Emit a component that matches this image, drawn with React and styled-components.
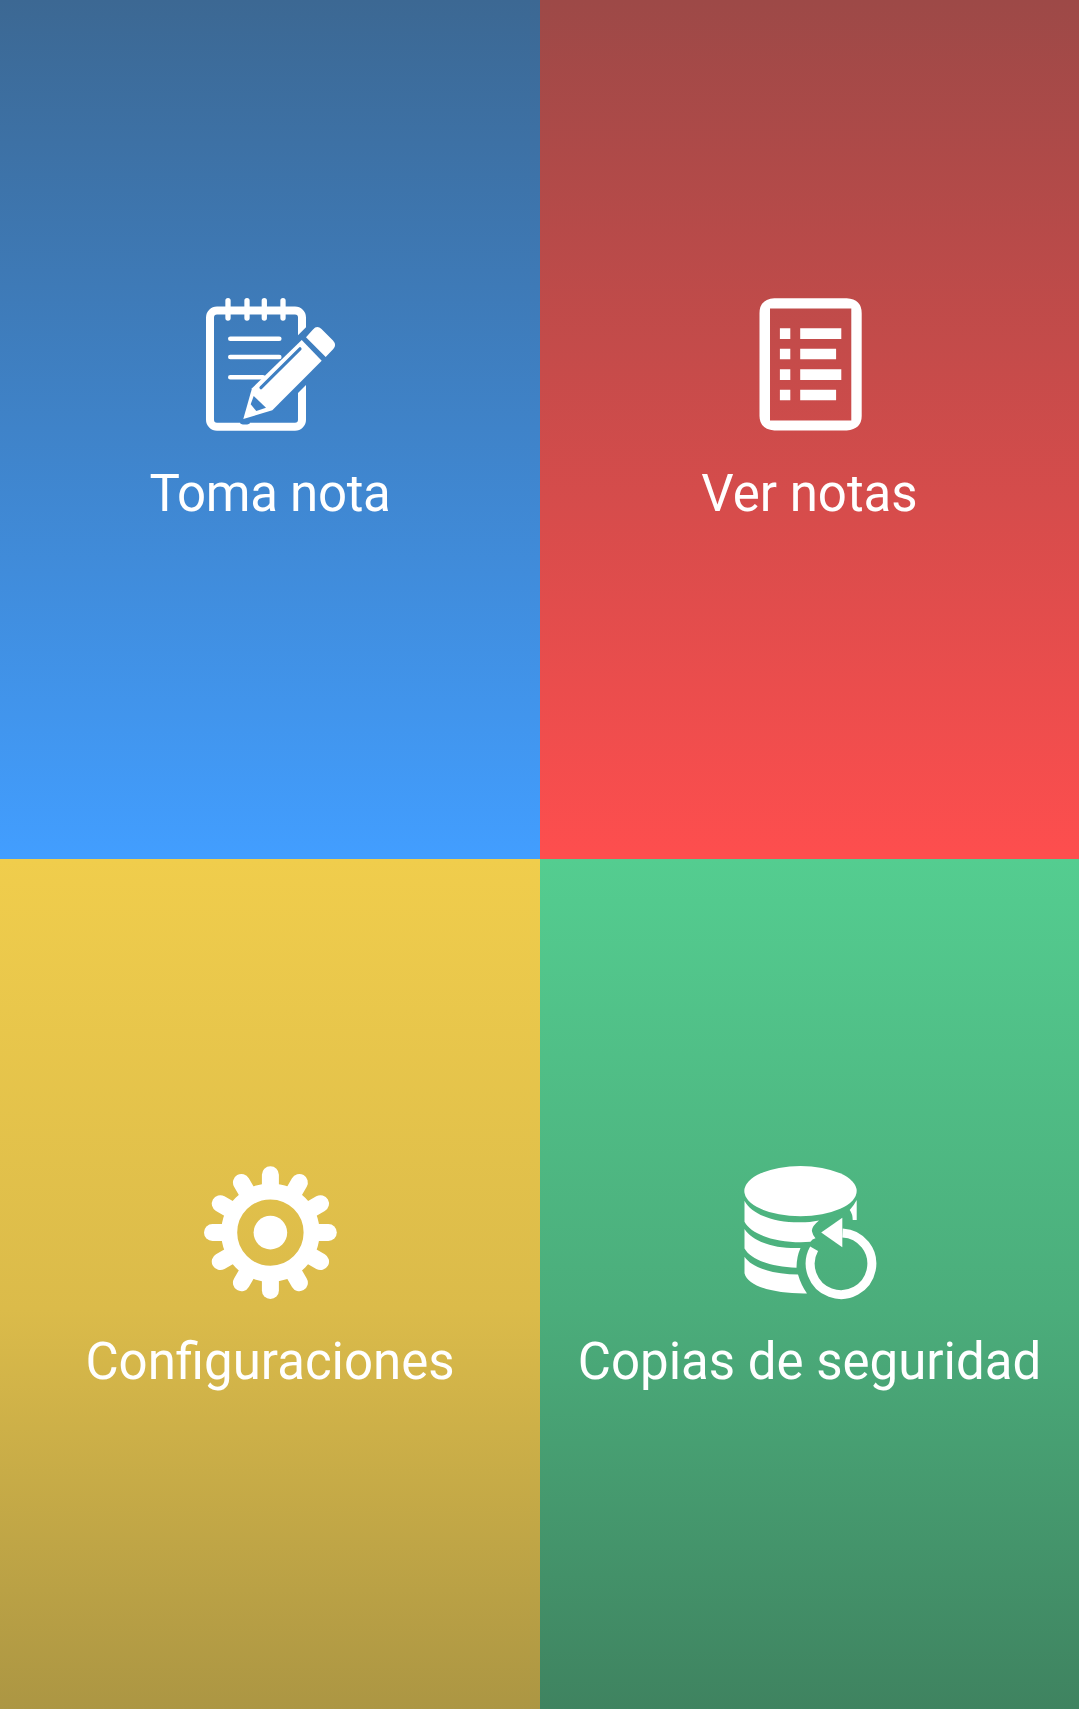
import React from 'react'
import styled, {createGlobalStyle} from 'styled-components'

const GlobalStyle = createGlobalStyle`
  body {
    margin: 0;
    overflow: hidden;
  }
`

const MenuGrid = styled.div`
  display: grid;
  grid-template-columns: 540px 539px;
  grid-template-rows: 859px 850px;
  height: 1709px;
`

const Tile = styled.button`
  display: flex;
  flex-direction: column;
  align-items: center;
  justify-content: flex-start;
  min-width: 0;
  border: none;
  margin: 0;
  padding: ${props => (props.$lower ? '307px' : '298px')} 0 0;
  background: linear-gradient(to bottom, ${props => props.$colors});
  cursor: pointer;
`

const IconBox = styled.svg`
  display: block;
  width: 134px;
  height: 134px;
  overflow: visible;
  fill: #ffffff;
`

const Outline = styled.g`
  fill: none;
  stroke: #ffffff;
  stroke-linecap: round;
`

const TileLabel = styled.span`
  margin-top: 32px;
  font-family: Roboto, 'Liberation Sans', sans-serif;
  font-size: 51px;
  line-height: 60px;
  letter-spacing: ${props => props.$spacing || 'normal'};
  white-space: nowrap;
  color: #ffffff;
`

const NoteIcon = () => (
  <IconBox viewBox="0 0 134 134">
    <defs>
      {/* gap that the pencil leaves in the right border of the sheet */}
      <mask
        id="sheet-mask"
        maskUnits="userSpaceOnUse"
        x="-2"
        y="-2"
        width="138"
        height="138"
      >
        <rect x="-2" y="-2" width="138" height="138" fill="#ffffff" />
        <path d="M90 42.3L110 22.3V80L90 100Z" fill="#000000" />
        <ellipse cx="42" cy="124.600" rx="5" ry="2" fill="#000000" />
      </mask>
      <mask
        id="pencil-mask"
        maskUnits="userSpaceOnUse"
        x="30"
        y="30"
        width="104"
        height="104"
      >
        <rect x="30" y="30" width="104" height="104" fill="#ffffff" />
        <path
          d="M58 89.700L97 50.800"
          stroke="#000000"
          strokeWidth="3.200"
          strokeLinecap="round"
        />
        <path d="M50.700 98L63 109.700L53.300 113L47.700 106.300Z" fill="#000000" />
      </mask>
    </defs>
    <Outline>
      <rect
        x="7"
        y="12.600"
        width="92"
        height="116.200"
        rx="7"
        strokeWidth="8"
        mask="url(#sheet-mask)"
      />
      <path
        d="M25 2.600V20M44 2.600V20M61.300 2.600V20M80 2.600V20"
        strokeWidth="5.300"
      />
      <path
        d="M27.300 40.700H76.300M27.300 59H76.300M27.300 79.300H60"
        strokeWidth="4.600"
      />
    </Outline>
    <path
      d="M98.700 42L118.700 62.700L69.300 112.300L40.300 121L49 90.300Z"
      mask="url(#pencil-mask)"
    />
    <path d="M103 39.300L110 31.500Q114 27 118.500 31L130 42.500Q134 47 130.300 51L122.700 59Z" />
  </IconBox>
)

const ListIcon = () => (
  <IconBox viewBox="0 0 134 134">
    <path
      fillRule="evenodd"
      d="M31.300 0.200H103.700Q118.700 1.200 118.700 15.200V118Q118.700 131 103.700 132.500H31.300Q16.500 131 16.500 118V15.200Q16.500 1.200 31.300 0.200ZM27 10.500V122.500H108.300V10.500Z"
    />
    <path d="M36.900 30.300H47.300V41H36.900ZM36.900 50.700H47.300V61.300H36.900ZM36.900 71.300H47.300V82H36.900ZM36.900 91.700H47.300V102.300H36.900Z" />
    <path d="M57.200 30.300H98.300V41H57.200ZM57.200 50.700H93.100V61.300H57.200ZM57.200 71.300H98.300V82H57.200ZM57.200 91.700H93.100V102.300H57.200Z" />
  </IconBox>
)

const teeth = [0, 30, 60, 90, 120, 150, 180, 210, 240, 270, 300, 330]

const GearIcon = () => (
  <IconBox viewBox="0 0 134 134">
    {teeth.map(angle => (
      <rect
        key={angle}
        x="58.900"
        y="0.200"
        width="17"
        height="28"
        rx="8.500"
        transform={`rotate(${angle} 67.400 66.600)`}
      />
    ))}
    <Outline>
      <circle cx="67.400" cy="66.600" r="41.200" strokeWidth="16" />
    </Outline>
    <circle cx="67.400" cy="66.600" r="16.800" />
  </IconBox>
)

const BackupIcon = () => (
  <IconBox viewBox="0 0 134 134">
    <ellipse cx="57.500" cy="25.100" rx="56.200" ry="25.100" />
    <path d="M1.500 34.700C9 49 32 56.500 57 56.300C64 56.300 70 55.800 76 54.500Q68 61 69 65.500Q70 70 72.500 72.300Q69 73 67.500 75.800C38 78 9 70 1.500 55.700Z" />
    <path d="M1.500 63C10 76 32 83 57.500 82Q53.500 91 53.500 101.700C29 101 8 94 1.500 82.500Z" />
    <path d="M1.500 90.700C9 102 31 108.500 55 108.500Q58 119 64 127.500C33 128 5 121 1.500 107.300Z" />
    <path d="M106.700 44Q111.200 39 113.700 34V54H109.700Q109.700 48 106.700 44Z" />
    <Outline>
      <path
        d="M71.100 82.800A30.800 30.800 0 1 0 99.500 67"
        strokeWidth="9"
        strokeLinecap="butt"
      />
    </Outline>
    <path d="M78.200 66.500L99.300 51.800V81.300Z" />
  </IconBox>
)

const menuItems = [
  {
    id: 'new',
    label: 'Toma nota',
    icon: NoteIcon,
    colors: '#3c6893, #429eff',
    spacing: '-0.3px',
  },
  {id: 'list', label: 'Ver notas', icon: ListIcon, colors: '#9d4947, #fe4e4e'},
  {
    id: 'settings',
    label: 'Configuraciones',
    icon: GearIcon,
    colors: '#f0cd4c, #dbbb4a 53%, #ac9643',
    lower: true,
  },
  {
    id: 'backup',
    label: 'Copias de seguridad',
    icon: BackupIcon,
    colors: '#54cd90, #4bad7b 53%, #3f8360',
    lower: true,
  },
]

const App = () => (
  <>
    <GlobalStyle />
    <MenuGrid>
      {menuItems.map(({id, label, icon: Icon, colors, lower, spacing}) => (
        <Tile key={id} type="button" $colors={colors} $lower={lower}>
          <Icon />
          <TileLabel $spacing={spacing}>{label}</TileLabel>
        </Tile>
      ))}
    </MenuGrid>
  </>
)

export default App
